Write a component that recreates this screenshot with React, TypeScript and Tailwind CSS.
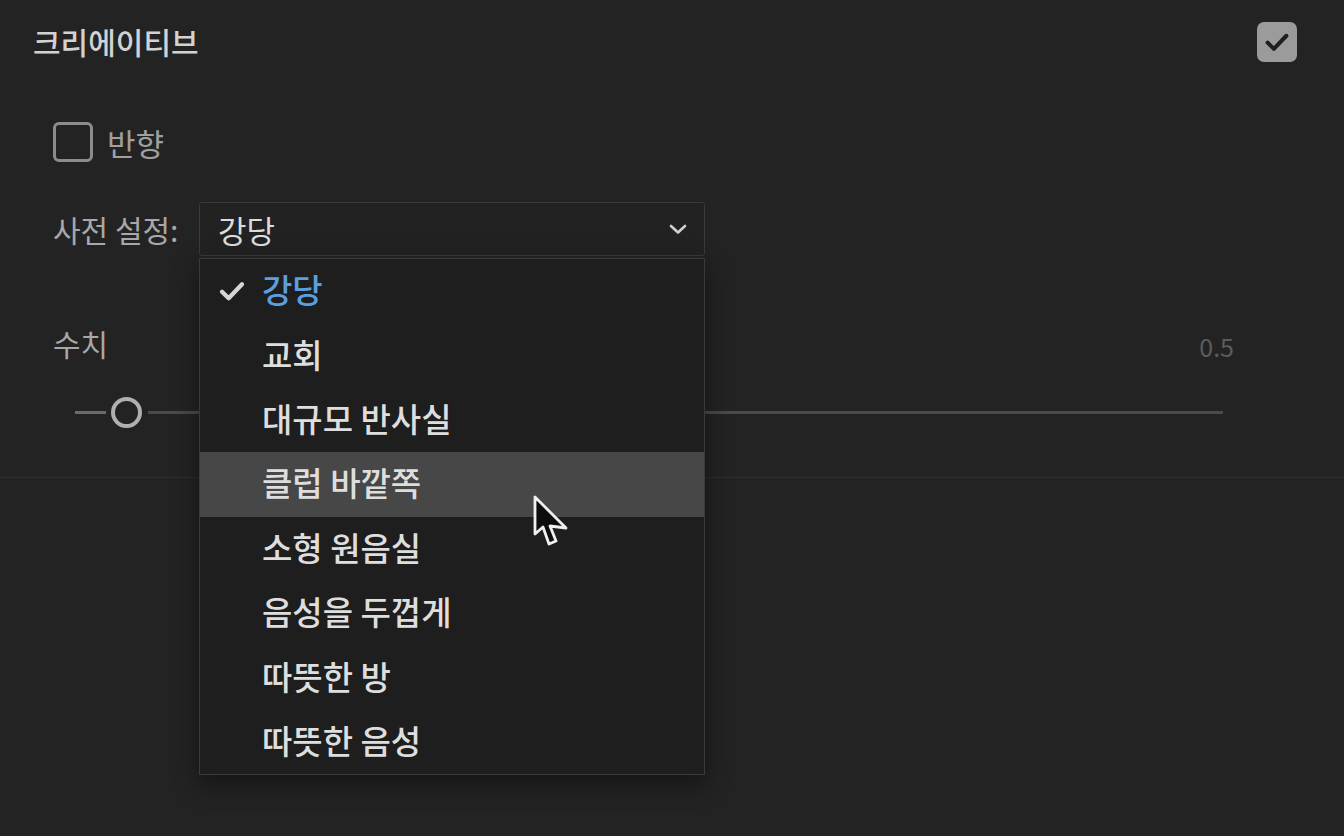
import { useState } from "react";

const presets = [
  "강당",
  "교회",
  "대규모 반사실",
  "클럽 바깥쪽",
  "소형 원음실",
  "음성을 두껍게",
  "따뜻한 방",
  "따뜻한 음성",
];

function CheckMark({ className }: { className?: string }) {
  return (
    <svg viewBox="0 0 24 24" className={className} fill="none">
      <path
        d="M4.5 12.5l5 5L19.5 7"
        stroke="currentColor"
        strokeWidth="3.2"
        strokeLinecap="round"
        strokeLinejoin="round"
      />
    </svg>
  );
}

function Cursor() {
  return (
    <svg
      viewBox="0 0 40 58"
      className="absolute z-30 left-[531px] top-[493px] w-[40px] h-[58px] pointer-events-none"
    >
      <path
        d="M4 4 L4 41 L12 34 L18 51 L25 48 L19 33 L35 35 Z"
        fill="#0d0d0d"
        stroke="#f0f0f0"
        strokeWidth="2.8"
        strokeLinejoin="round"
      />
    </svg>
  );
}

export default function App() {
  const [selected] = useState("강당");
  const hovered = "클럽 바깥쪽";

  return (
    <div
      className="relative w-[1344px] h-[836px] bg-[#232323] overflow-hidden"
      style={{ fontFamily: '"Noto Sans CJK KR", "Noto Sans", sans-serif' }}
    >
      {/* 헤더 */}
      <div className="flex items-center justify-between pl-[33px] pr-[47px] pt-[21px] h-[62px]">
        <p className="text-[30px] font-medium text-[#d2d2d2] leading-none -mt-[2px]">
          크리에이티브
        </p>
        <div className="w-10 h-10 rounded-[7px] bg-[#9b9b9b] flex items-center justify-center">
          <CheckMark className="w-[30px] h-[30px] text-[#1f1f1f]" />
        </div>
      </div>

      {/* 반향 */}
      <div className="flex items-center pl-[53px] mt-[60px] h-10">
        <div className="w-10 h-10 rounded-[6px] border-[3px] border-[#8c8c8c]" />
        <p className="ml-[14px] text-[31px] text-[#a0a0a0] leading-none">반향</p>
      </div>

      {/* 사전 설정 */}
      <div className="flex items-center pl-[53px] mt-10">
        <p className="text-[30px] text-[#a8a8a8] leading-none w-[146px]">사전 설정:</p>
        <div className="relative">
          <div className="w-[506px] h-[54px] border border-[#3a3a3a] rounded-[3px] bg-[#222222] flex items-center justify-between pl-[18px] pr-[14px]">
            <span className="text-[31px] text-[#dcdcdc] leading-none">{selected}</span>
            <svg viewBox="0 0 24 24" className="w-6 h-6 text-[#d0d0d0]" fill="none">
              <path
                d="M5 9l7 6.5L19 9"
                stroke="currentColor"
                strokeWidth="2.6"
                strokeLinecap="round"
                strokeLinejoin="round"
              />
            </svg>
          </div>

          {/* 드롭다운 메뉴 */}
          <ul className="absolute z-10 left-0 top-[56px] w-[506px] bg-[#1e1e1e] border border-[#3a3a3a] shadow-[0_8px_24px_rgba(0,0,0,0.45)]">
            {presets.map((p) => (
              <li
                key={p}
                className={`h-[64.4px] flex items-center ${p === hovered ? "bg-[#474747]" : ""}`}
              >
                <span className="w-[62px] flex justify-center pl-[2px]">
                  {p === selected && <CheckMark className="w-[32px] h-[32px] text-[#d6d6d6]" />}
                </span>
                <span
                  className={`text-[33px] font-medium leading-none -mt-[3px] ${
                    p === selected ? "text-[#5aa0e0]" : "text-[#dedede]"
                  }`}
                >
                  {p}
                </span>
              </li>
            ))}
          </ul>
        </div>
      </div>

      {/* 수치 */}
      <div className="pl-[53px] pr-[110px] mt-[70px] flex items-center justify-between">
        <p className="text-[30px] text-[#a8a8a8] leading-none">수치</p>
        <p className="text-[25px] text-[#5c5c5c] leading-none mt-[8px]">0.5</p>
      </div>

      {/* 슬라이더 */}
      <div className="pl-[75px] pr-[121px] mt-[38px] flex items-center h-[30px]">
        <div className="w-[31px] h-[3px] bg-[#6a6a6a]" />
        <div className="ml-[5px] mr-[6px] w-[31px] h-[31px] rounded-full border-[4px] border-[#b0b0b0] shrink-0" />
        <div className="flex-1 h-[3px] bg-[#4a4a4a]" />
      </div>

      {/* 구분선 */}
      <div className="mt-[50px] h-px bg-[#2e2e2e]" />

      <Cursor />
    </div>
  );
}
